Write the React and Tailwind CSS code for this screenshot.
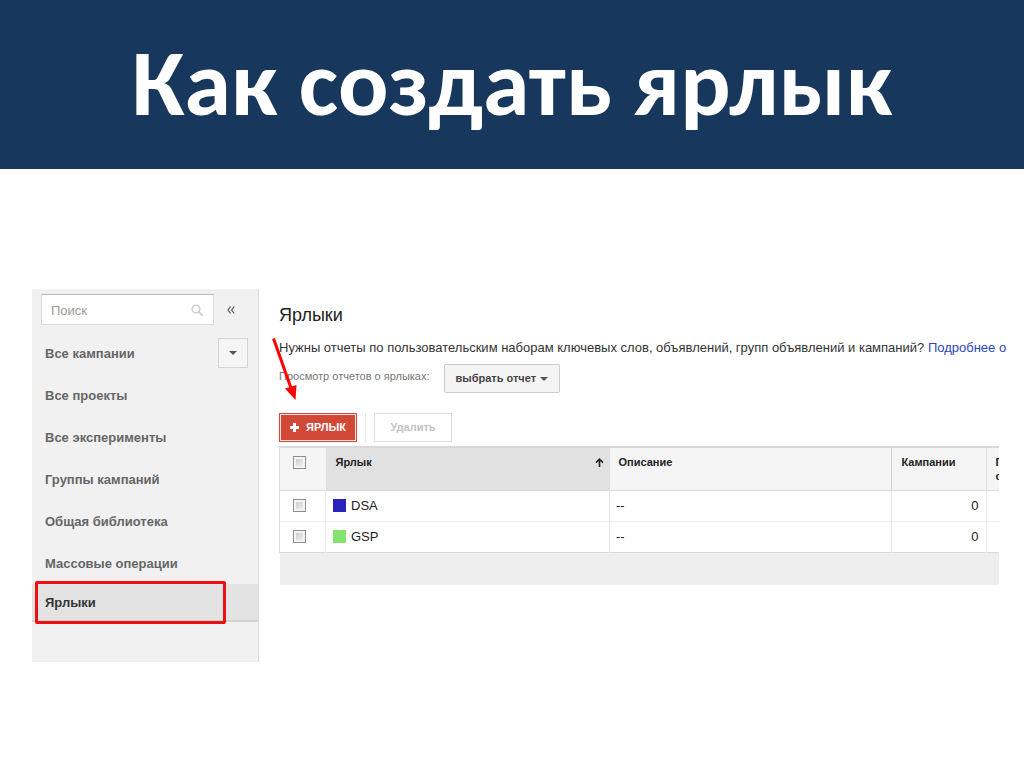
const navItems = [
  "Все кампании",
  "Все проекты",
  "Все эксперименты",
  "Группы кампаний",
  "Общая библиотека",
  "Массовые операции",
];

const labels = [
  { name: "DSA", swatch: "bg-[#2a22bb]", description: "--", campaigns: 0 },
  { name: "GSP", swatch: "bg-[#84e270]", description: "--", campaigns: 0 },
];

function Caret() {
  return (
    <svg width="8" height="4" viewBox="0 0 8 4" aria-hidden="true">
      <path d="M0 0h8L4 4z" fill="#555" />
    </svg>
  );
}

function Tick({ label }) {
  return (
    <input
      type="checkbox"
      aria-label={label}
      className="block size-[13px] appearance-none border border-[#8e8f8f] bg-linear-to-br from-[#c4c8cc] to-[#f6f6f6] shadow-[inset_0_0_0_2px_#f4f4f4] checked:bg-blue-600"
    />
  );
}

function Sidebar() {
  return (
    <aside className="flex min-h-[373px] w-[227px] shrink-0 flex-col border-r border-[#d9d9d9] bg-[#f1f1f1]">
      <div className="flex items-center gap-[11px] pt-[5px] pl-[9px]">
        <label className="flex h-[31px] w-[173px] items-center border border-[#d9d9d9] border-t-[#b9b9b9] bg-white pr-2.5 pl-[9px]">
          <input
            type="text"
            aria-label="Поиск"
            placeholder="Поиск"
            className="min-w-0 flex-1 pt-[3px] text-[13px] outline-none placeholder:text-[#9c9a93]"
          />
          <svg width="12" height="12" viewBox="0 0 12 12" fill="none" stroke="#d0d0d0" aria-hidden="true">
            <circle cx="5" cy="5" r="3.8" strokeWidth="1.6" />
            <path d="M7.8 7.8 11 11" strokeWidth="2" strokeLinecap="round" />
          </svg>
        </label>
        <button type="button" aria-label="Свернуть" className="flex h-6 w-3 items-center justify-center">
          <svg width="8" height="8" viewBox="0 0 8 8" fill="none" stroke="#555" strokeWidth="1.2" aria-hidden="true">
            <path d="M3.6.5 1 4l2.6 3.5M7.2.5 4.6 4l2.6 3.5" />
          </svg>
        </button>
      </div>
      <nav className="pt-[7px] text-[13px] font-bold text-[#666]">
        {navItems.map((item, i) => (
          <div key={item} className="flex h-[42px] items-center justify-between pr-2.5 pl-[13px]">
            <a href="#" className="pt-px">
              {item}
            </a>
            {i === 0 && (
              <button
                type="button"
                aria-label="Меню кампаний"
                className="flex size-[30px] items-center justify-center border border-[#d4d4d4] bg-[#f5f5f5]"
              >
                <Caret />
              </button>
            )}
          </div>
        ))}
        <div className="relative flex h-[38px] items-center border-b-2 border-[#d2d2d2] bg-[#e3e3e3] pl-[13px] text-[#333]">
          <a href="#" className="pt-px">
            Ярлыки
          </a>
          <span className="absolute -top-[3px] left-[3px] h-[43px] w-[191px] rounded-[2px] border-3 border-[#ee1010]" />
        </div>
      </nav>
    </aside>
  );
}

function LabelsTable() {
  return (
    <table className="w-full table-fixed border-collapse text-left text-[#222]">
      <colgroup>
        <col className="w-[46px]" />
        <col className="w-[284px]" />
        <col />
        <col className="w-[95px]" />
        <col className="w-[13px]" />
      </colgroup>
      <thead>
        <tr className="h-[43px] border-t-2 border-b border-t-[#d9d9d9] border-b-[#d9d9d9] bg-[#f5f5f5] align-top text-[11px] leading-[14px]">
          <th className="border-l border-[#dedede] pt-2 pl-[13px]">
            <Tick label="Выбрать все" />
          </th>
          <th className="bg-[#e1e1e1] pt-[7px] pr-[6px] pl-[10px]">
            <div className="flex items-center justify-between">
              <span>Ярлык</span>
              <svg width="9" height="9" viewBox="0 0 9 9" fill="none" stroke="#222" strokeWidth="1.6" aria-hidden="true">
                <path d="M4.5 9V1.4M1 4.6l3.5-3.4L8 4.6" />
              </svg>
            </div>
          </th>
          <th className="border-r border-[#d4d4d4] px-[9px] pt-[7px]">Описание</th>
          <th className="border-r border-[#dedede] px-[10px] pt-[7px]">Кампании</th>
          <th className="overflow-hidden pt-[7px] pl-[9px]">
            Группы
            <br />
            объявлений
          </th>
        </tr>
      </thead>
      <tbody className="text-[13px] leading-4">
        {labels.map((row) => (
          <tr key={row.name} className="h-[31px] border-b border-[#eee] last:border-[#d9d9d9]">
            <td className="border-x border-l-[#dedede] border-r-[#eee] pl-[13px]">
              <Tick label={row.name} />
            </td>
            <td className="border-r border-[#e6e6e6] pl-[7px]">
              <span className="flex items-center gap-[5px]">
                <span className={`size-[13px] ${row.swatch}`} />
                {row.name}
              </span>
            </td>
            <td className="border-r border-[#e6e6e6] pl-1.5">{row.description}</td>
            <td className="border-r border-[#eee] pr-[7px] text-right">{row.campaigns}</td>
            <td />
          </tr>
        ))}
      </tbody>
      <tfoot>
        <tr className="h-[33px] bg-[#eee]">
          <td colSpan={5} />
        </tr>
      </tfoot>
    </table>
  );
}

export default function App() {
  return (
    <div className="min-h-screen bg-white font-['Liberation_Sans',Arial,sans-serif]">
      <header className="flex h-[169px] items-center justify-center bg-[#18375d] pb-1">
        <h1 className="font-['Carlito','Open_Sans',sans-serif] text-[94px] leading-none font-bold whitespace-nowrap text-white">
          Как создать ярлык
        </h1>
      </header>
      <div className="flex pt-[120px] pr-[25px] pl-8">
        <Sidebar />
        <main className="relative ml-5 min-w-0 flex-1 pt-3.5">
          <h2 className="text-[18px] leading-6 text-[#222]">Ярлыки</h2>
          <p className="mt-[9px] text-[13px] leading-6 whitespace-nowrap text-[#333]">
            Нужны отчеты по пользовательским наборам ключевых слов, объявлений, групп объявлений и кампаний?{" "}
            <a href="#" className="text-[#2a45c4]">
              Подробнее о
            </a>
          </p>
          <div className="mt-1 flex items-center gap-[14px]">
            <span className="pb-1 text-[11px] text-[#777]">Просмотр отчетов о ярлыках:</span>
            <button
              type="button"
              className="flex h-[29px] items-center gap-1 rounded-[2px] border border-[#ccc] bg-[#f4f4f4] px-[11px] text-[11px] font-bold text-[#444]"
            >
              выбрать отчет
              <Caret />
            </button>
          </div>
          <div className="mt-5 mb-1 flex h-[29px] items-stretch">
            <button
              type="button"
              className="flex w-[78px] items-center justify-center gap-[7px] border border-[#d8473a] bg-[#d14836] text-[11px] font-bold text-white shadow-[inset_0_0_0_1px_#fbe3df]"
            >
              <svg width="9" height="9" viewBox="0 0 9 9" stroke="#fff" strokeWidth="3" aria-hidden="true">
                <path d="M4.5 0v9M0 4.5h9" />
              </svg>
              ЯРЛЫК
            </button>
            <span className="mx-2 border-l border-[#e8e8e8]" />
            <button
              type="button"
              disabled
              className="w-[78px] border border-[#dcdcdc] bg-white text-[11px] font-bold text-[#c3c3c3]"
            >
              Удалить
            </button>
          </div>
          <LabelsTable />
          <svg className="absolute top-12 -left-2" width="28" height="66" viewBox="0 0 28 66" aria-hidden="true">
            <path d="M2.500 1.500 20 51" stroke="#f00" strokeWidth="3" />
            <path d="M14 51.500 25.500 48 24.500 63z" fill="#f00" />
          </svg>
        </main>
      </div>
    </div>
  );
}
